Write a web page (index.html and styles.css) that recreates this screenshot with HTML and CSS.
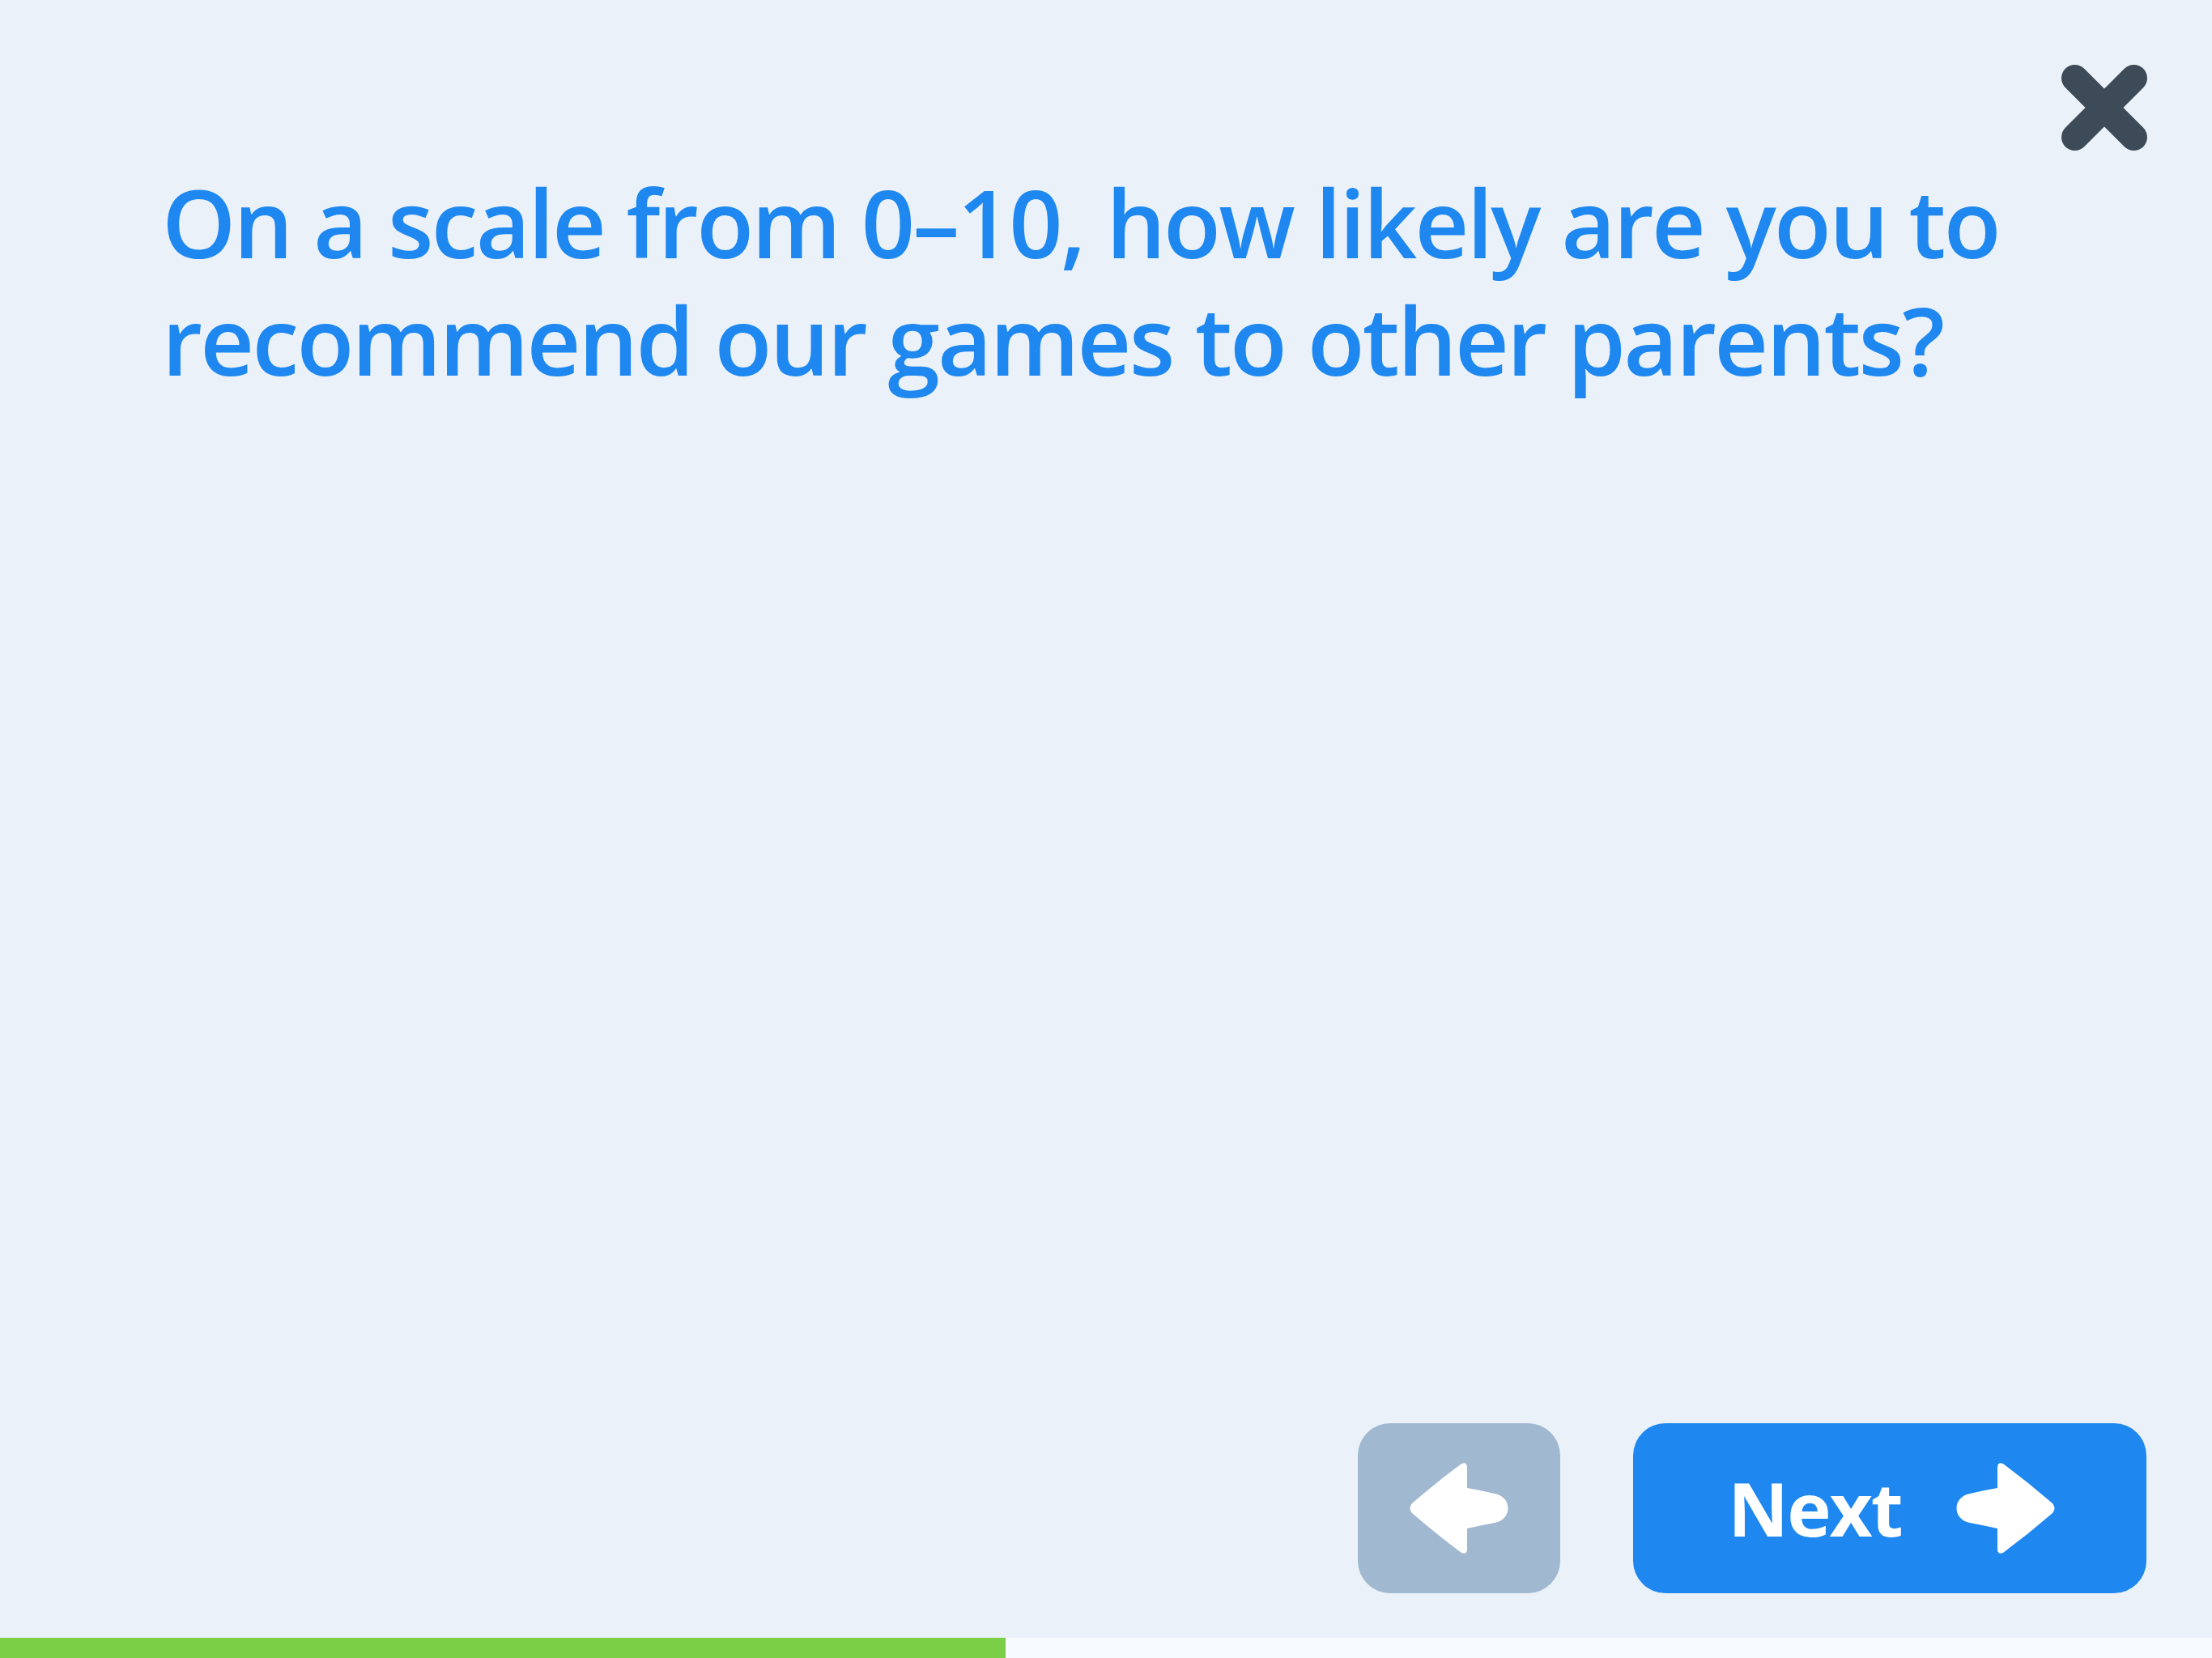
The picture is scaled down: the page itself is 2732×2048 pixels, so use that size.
FILE: index.html
```html
<!DOCTYPE html>
<html lang="en">
<head>
<meta charset="utf-8">
<title>Survey</title>
<link rel="stylesheet" href="styles.css">
</head>
<body>
<div class="screen">
  <button class="close" aria-label="Close">
    <svg viewBox="0 0 106 106" width="106" height="106"><path d="M16.5 16.5 L89.5 89.5 M89.5 16.5 L16.5 89.5" stroke="#3d4a57" stroke-width="33" stroke-linecap="round" fill="none"/></svg>
  </button>
  <main class="content">
    <h1 class="question">On a scale from 0–10, how likely are you to recommend our games to other parents?</h1>
  </main>
  <div class="nav">
    <button class="btn btn-back" aria-label="Back">
      <svg class="arrow arrow-left" viewBox="0 0 124 116" width="124" height="116"><path d="M52 8 Q52 0 59 3 Q90 26 120 52 Q125 58 120 64 Q90 90 59 113 Q52 116 52 108 L52 83 Q34 79 18 76 C-4 72 -4 44 18 40 Q34 36 52 33 Z" fill="#fff"/></svg>
    </button>
    <button class="btn btn-next">
      <span class="btn-label">Next</span>
      <svg class="arrow" viewBox="0 0 124 116" width="124" height="116"><path d="M52 8 Q52 0 59 3 Q90 26 120 52 Q125 58 120 64 Q90 90 59 113 Q52 116 52 108 L52 83 Q34 79 18 76 C-4 72 -4 44 18 40 Q34 36 52 33 Z" fill="#fff"/></svg>
    </button>
  </div>
  <div class="progress"><div class="progress-fill" style="width:1242px"></div></div>
</div>
</body>
</html>
```
FILE: styles.css
```css
* { box-sizing: border-box; }
html, body { margin: 0; padding: 0; }
body {
  width: 2732px;
  height: 2048px;
  background: #eaf1f9;
  font-family: "Open Sans", "Noto Sans", sans-serif;
  overflow: hidden;
}
.screen {
  position: relative;
  width: 2732px;
  height: 2048px;
  display: flex;
  flex-direction: column;
}
.close {
  position: absolute;
  top: 80px;
  right: 80px;
  width: 106px;
  height: 106px;
  padding: 0;
  border: 0;
  background: none;
  display: block;
}
.close svg { display: block; }
.content {
  flex: 1;
  padding: 202px 200px 0 200px;
}
.question {
  margin: 0;
  max-width: 2400px;
  font-size: 116px;
  line-height: 145px;
  font-weight: 600;
  color: #1e88f0;
  letter-spacing: -2.7px;
}
.nav {
  display: flex;
  justify-content: flex-end;
  gap: 90px;
  padding-right: 81px;
  margin-bottom: 55px;
}
.btn {
  height: 210px;
  border: 0;
  border-radius: 40px;
  display: flex;
  align-items: center;
  justify-content: center;
  padding: 0;
  font-family: inherit;
}
.btn-back {
  width: 250px;
  background: #a0b8d0;
}
.btn-next {
  width: 634px;
  background: #1e88f0;
  gap: 66px;
  padding-left: 5px;
}
.btn-label {
  color: #fff;
  font-size: 92px;
  font-weight: 700;
  letter-spacing: -2px;
  line-height: 1;
}
.arrow { display: block; }
.arrow-left { transform: scaleX(-1); }
.progress {
  height: 25px;
  background: #f8fbfe;
}
.progress-fill {
  height: 100%;
  background: #7acf47;
}
```
